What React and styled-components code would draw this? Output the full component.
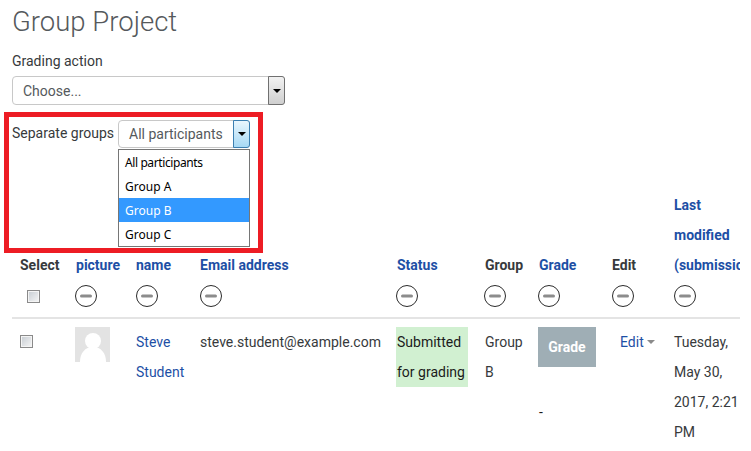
import React from "react";
import styled, { createGlobalStyle } from "styled-components";

const GlobalStyle = createGlobalStyle`
	html, body {
		margin: 0;
		padding: 0;
		background: #ffffff;
		overflow: hidden;
	}
	body {
		font-family: Roboto, "Liberation Sans", sans-serif;
		font-size: 15px;
		color: #373a3c;
	}
`;

const Page = styled.div`
	position: relative;
	width: 751px;
	height: 451px;
	overflow: hidden;
	padding: 0 11px 0 12px;
	box-sizing: border-box;
`;

const Title = styled.h2`
	margin: 0;
	padding-top: 5px;
	height: 52px;
	box-sizing: border-box;
	font-size: 27.5px;
	line-height: 34px;
	font-weight: 300;
	color: #55595c;
`;

const FieldLabel = styled.div`
	font-size: 14px;
	line-height: 18px;
	height: 24px;
	color: #373a3c;
`;

const SelectBox = styled.div`
	display: flex;
	align-items: stretch;
	box-sizing: border-box;
	width: ${({ width }) => width}px;
	height: ${({ height }) => height}px;
	border: 1px solid #c8c8c8;
	border-radius: 4px;
	background: #ffffff;
`;

const SelectText = styled.div`
	flex: 1;
	padding-left: 10px;
	font-size: 14px;
	line-height: ${({ height }) => height}px;
	color: #55595c;
`;

const ArrowButton = styled.div`
	display: flex;
	align-items: center;
	justify-content: center;
	box-sizing: border-box;
	width: 17px;
	margin: -1px -1px -1px 0;
	border: 1px solid ${({ active }) => (active ? "#3c7fb1" : "#707070")};
	border-radius: 0 3px 3px 0;
	background: ${({ active }) =>
		active
			? "linear-gradient(#eaf6fd, #a7d9f5)"
			: "linear-gradient(#f2f2f2, #cfcfcf)"};
`;

const ArrowGlyph = styled.span`
	width: 0;
	height: 0;
	border-left: 4px solid transparent;
	border-right: 4px solid transparent;
	border-top: 4px solid #000000;
`;

const GroupRow = styled.div`
	position: relative;
	display: flex;
	align-items: flex-start;
	gap: 4px;
	margin-top: 15px;
	height: 70px;
`;

const GroupLabel = styled.div`
	font-size: 14px;
	line-height: 26px;
	color: #373a3c;
`;

const Dropdown = styled.ul`
	position: absolute;
	left: 106px;
	top: 29px;
	z-index: 3;
	box-sizing: border-box;
	width: 132px;
	margin: 0;
	padding: 0;
	list-style: none;
	border: 1px solid #767676;
	background: #ffffff;
`;

const Option = styled.li`
	height: 24px;
	padding-left: 6px;
	font-family: "Noto Sans", sans-serif;
	font-size: 12px;
	line-height: 26px;
	letter-spacing: ${({ tight }) => (tight ? "-0.4px" : "0")};
	color: ${({ selected }) => (selected ? "#ffffff" : "#000000")};
	background: ${({ selected }) => (selected ? "#3399ff" : "transparent")};
`;

const Highlight = styled.div`
	position: absolute;
	left: 4px;
	top: 112px;
	z-index: 4;
	box-sizing: border-box;
	width: 259px;
	height: 141px;
	border: 5px solid #ed1c24;
	pointer-events: none;
`;

const Table = styled.table`
	table-layout: fixed;
	width: 738px;
	border-collapse: collapse;
`;

const TableClip = styled.div`
	width: 728px;
	overflow: hidden;
`;

const HeadCell = styled.th`
	box-sizing: border-box;
	padding: 0 8px;
	width: ${({ width }) => width}px;
	vertical-align: bottom;
	text-align: left;
	font-size: 14px;
	line-height: 30px;
	font-weight: 700;
	color: ${({ link }) => (link ? "#1d4fa5" : "#373a3c")};
`;

const ToolCell = styled.td`
	height: 37px;
	padding: 0 8px;
	border-bottom: 2px solid #e4e4e4;
	vertical-align: top;
`;

const Cell = styled.td`
	padding: 8px 8px 0;
	vertical-align: top;
	font-size: 14px;
	line-height: 30px;
	color: #373a3c;
`;

const ToolSlot = styled.div`
	display: flex;
	align-items: center;
	height: 32px;
	margin-left: ${({ inset }) => inset || 0}px;
`;

const Check = styled.span`
	display: block;
	box-sizing: border-box;
	width: 13px;
	height: 13px;
	margin-left: ${({ inset }) => inset || 0}px;
	border: 1px solid #8a8a8a;
	box-shadow: inset 0 0 0 1px #f4f4f4;
	background: linear-gradient(135deg, #c6ccd2, #f6f6f6);
`;

const RowCheck = styled.div`
	padding-top: 8px;
`;

const Avatar = styled.svg`
	display: block;
	margin-left: -1px;
	width: 35px;
	height: 35px;
`;

const NameLink = styled.a`
	color: #1d4fa5;
	text-decoration: none;
`;

const StatusTag = styled.div`
	margin-left: -1px;
	padding-left: 1px;
	width: 72px;
	box-sizing: border-box;
	background: #d1f0d1;
	color: #1b1b1b;
	white-space: nowrap;
`;

const GradeButton = styled.div`
	margin-left: -1px;
	width: 58px;
	height: 40px;
	background: #9faeb5;
	color: #ffffff;
	font-weight: 700;
	line-height: 40px;
	text-align: center;
`;

const GradeDash = styled.div`
	margin-top: 30px;
	color: #1b1b1b;
`;

const EditLink = styled.a`
	display: inline-flex;
	align-items: center;
	gap: 3px;
	margin-left: 8px;
	color: #1d4fa5;
`;

const EditCaret = styled.span`
	width: 0;
	height: 0;
	border-left: 4px solid transparent;
	border-right: 4px solid transparent;
	border-top: 4px solid #8a8a8a;
`;

const MinusCircle = () => (
	<svg width="24" height="24" viewBox="0 0 24 24">
		<circle cx="12" cy="12" r="10.5" fill="#ffffff" stroke="#2b2b2b" strokeWidth="1" />
		<rect x="6" y="10.5" width="12" height="3" rx="1.5" fill="#8c8c8c" />
	</svg>
);

const columns = [
	{ label: "Select", width: 56 },
	{ label: "picture", width: 60, link: true, inset: -2 },
	{ label: "name", width: 64, link: true, inset: -1 },
	{ label: "Email address", width: 197, link: true, inset: -1 },
	{ label: "Status", width: 88, link: true, inset: -2 },
	{ label: "Group", width: 54, inset: -2 },
	{ label: "Grade", width: 73, link: true, inset: -2 },
	{ label: "Edit", width: 62, inset: -1 },
	{ label: "Last modified (submission)", width: 84, link: true, inset: -1 },
];

const groups = ["All participants", "Group A", "Group B", "Group C"];

export default function App() {
	return (
		<Page>
			<GlobalStyle />
			<Title>Group Project</Title>
			<FieldLabel>Grading action</FieldLabel>
			<SelectBox width={273} height={29}>
				<SelectText height={29}>Choose...</SelectText>
				<ArrowButton>
					<ArrowGlyph />
				</ArrowButton>
			</SelectBox>
			<GroupRow>
				<GroupLabel>Separate groups</GroupLabel>
				<SelectBox width={132} height={28}>
					<SelectText height={26}>All participants</SelectText>
					<ArrowButton active>
						<ArrowGlyph />
					</ArrowButton>
				</SelectBox>
				<Dropdown>
					{groups.map((group) => (
						<Option
							key={group}
							selected={group === "Group B"}
							tight={group === "All participants"}
						>
							{group}
						</Option>
					))}
				</Dropdown>
			</GroupRow>
			<Highlight />
			<TableClip>
				<Table>
					<thead>
						<tr>
							{columns.map((column) => (
								<HeadCell key={column.label} width={column.width} link={column.link}>
									{column.label}
								</HeadCell>
							))}
						</tr>
						<tr>
							<ToolCell>
								<ToolSlot>
									<Check inset={7} />
								</ToolSlot>
							</ToolCell>
							{columns.slice(1).map((column) => (
								<ToolCell key={column.label}>
									<ToolSlot inset={column.inset}>
										<MinusCircle />
									</ToolSlot>
								</ToolCell>
							))}
						</tr>
					</thead>
					<tbody>
						<tr>
							<Cell>
								<RowCheck>
									<Check />
								</RowCheck>
							</Cell>
							<Cell>
								<Avatar viewBox="0 0 35 35">
									<rect width="35" height="35" fill="#e3e3e3" />
									<circle cx="18" cy="14" r="8" fill="#ffffff" />
									<path d="M5 35c0-9 5-15 13-15s13 6 13 15z" fill="#ffffff" />
								</Avatar>
							</Cell>
							<Cell>
								<NameLink>Steve Student</NameLink>
							</Cell>
							<Cell>steve.student@example.com</Cell>
							<Cell>
								<StatusTag>
									Submitted
									<br />
									for grading
								</StatusTag>
							</Cell>
							<Cell>Group B</Cell>
							<Cell>
								<GradeButton>Grade</GradeButton>
								<GradeDash>-</GradeDash>
							</Cell>
							<Cell>
								<EditLink>
									Edit
									<EditCaret />
								</EditLink>
							</Cell>
							<Cell>Tuesday, May 30, 2017, 2:21 PM</Cell>
						</tr>
					</tbody>
				</Table>
			</TableClip>
		</Page>
	);
}
